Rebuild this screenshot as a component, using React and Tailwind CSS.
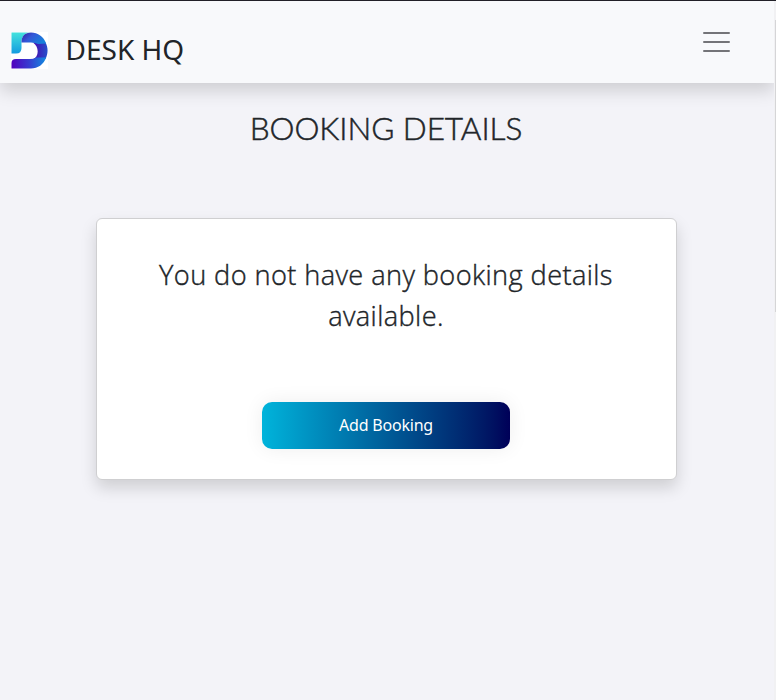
function Logo() {
  return (
    <svg className="h-[37px] w-[37px] shrink-0" viewBox="0 0 37 37" aria-label="Desk HQ logo">
      <defs>
        <linearGradient id="stem" x1="0" y1="0" x2="0" y2="1">
          <stop offset="0" stopColor="#43e2dd" />
          <stop offset="1" stopColor="#149be0" />
        </linearGradient>
        <linearGradient id="arch" x1="0" y1="0" x2="1" y2="0.5">
          <stop offset="0" stopColor="#311f9e" />
          <stop offset="0.45" stopColor="#3457d8" />
          <stop offset="1" stopColor="#1680db" />
        </linearGradient>
        <linearGradient id="side" x1="0" y1="0" x2="1" y2="0">
          <stop offset="0" stopColor="#4909ae" />
          <stop offset="1" stopColor="#2650cb" />
        </linearGradient>
        <linearGradient id="foot" x1="0" y1="0" x2="1" y2="0">
          <stop offset="0" stopColor="#5200bd" />
          <stop offset="0.5" stopColor="#373bd0" />
          <stop offset="1" stopColor="#128ce0" />
        </linearGradient>
      </defs>
      <rect width="37" height="37" fill="#fff" />
      <path d="M0.500 0.500H19C13 1 10.500 5 10.500 11V16Q10.500 21.500 5 21.500H0.500Z" fill="url(#stem)" />
      <path d="M22 10.500L34.500 10.500C37.500 16 37 22 34.500 27H22C28 25 28.500 15 22 10.500Z" fill="url(#side)" />
      <path d="M10.500 10.500C10.500 4 14 0.500 20 0.500C27 0.500 32.500 4.500 35.200 11.500L27 12Q24 10.500 20 10.500Z" fill="url(#arch)" />
      <path d="M0.500 36.500V31Q0.500 27 5 27H19Q23 27 25 25.500L35.200 25.500C32.500 32.500 27 36.500 20 36.500Z" fill="url(#foot)" />
    </svg>
  );
}

export default function App() {
  return (
    <div className="flex h-[700px] w-[776px] overflow-hidden border-t border-[#212027] bg-[#f3f3f8] text-[#212529]">
      <div className="flex w-[774px] shrink-0 flex-col">
        <nav className="flex h-[82px] shrink-0 items-start justify-between bg-[#f8f9fb] pl-[11px] pr-[43px] shadow-[0_8px_16px_rgba(0,0,0,0.15)]">
          <div className="mt-[31px] flex h-[37px] items-center">
            <Logo />
            <span className="-mt-[2px] ml-[17.5px] whitespace-nowrap font-['Noto_Sans',sans-serif] text-[28px] leading-[37px]">
              DESK HQ
            </span>
          </div>
          <button type="button" aria-label="Menu" className="mt-[26px]">
            <svg className="h-[30px] w-[30px]" viewBox="0 0 30 30" stroke="#747478" strokeWidth="2" strokeLinecap="round">
              <path d="M3 6H28M3 15H28M3 24H28" />
            </svg>
          </button>
        </nav>
        <main className="flex flex-col items-center pr-[2px]">
          <h1 className="mt-[26px] whitespace-nowrap font-['Lato',sans-serif] text-[31.5px] font-light leading-[38px] tracking-[-0.05px] [-webkit-text-stroke:0.5px_#212529]">
            BOOKING DETAILS
          </h1>
          <section className="mt-[71px] flex h-[262px] w-[581px] flex-col items-center rounded-[6px] border border-[#cfcfd1] bg-white shadow-[0_8px_16px_rgba(0,0,0,0.15)]">
            <p className="mt-[35px] w-[500px] text-center font-['Open_Sans',sans-serif] text-[27.2px] font-light leading-[41px] tracking-[0.4px] [-webkit-text-stroke:0.4px_#212529]">
              You do not have any booking details available.
            </p>
            <button
              type="button"
              className="mt-[66px] h-[47px] w-[248px] rounded-[10px] bg-linear-to-r from-[#00b4db] to-[#000058] pb-[2px] font-['Noto_Sans',sans-serif] text-[16px] tracking-[-0.2px] text-white shadow-[0_0_20px_#eeeeee]"
            >
              Add Booking
            </button>
          </section>
        </main>
      </div>
      <div className="flex w-[2px] flex-col bg-[#f1f1f3]">
        <div className="ml-px mt-[19px] h-[292px] w-px bg-[#d5d5d7]" />
      </div>
    </div>
  );
}
